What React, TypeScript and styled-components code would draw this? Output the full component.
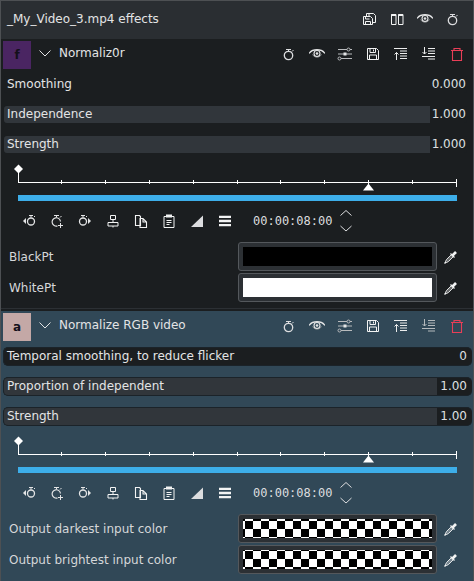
import React from 'react'
import styled, { createGlobalStyle } from 'styled-components'

const GlobalStyle = createGlobalStyle`
	html, body {
		margin: 0;
		padding: 0;
		width: 474px;
		height: 581px;
		overflow: hidden;
		background: #1b1e20;
	}
	* {
		box-sizing: border-box;
	}
`

const Stack = styled.div`
	width: 474px;
	height: 581px;
	display: flex;
	flex-direction: column;
	border: 1px solid #4d5053;
	border-bottom: none;
	font-family: 'DejaVu Sans', sans-serif;
	font-size: 12px;
	color: #e3e4e5;
	overflow: hidden;
`

const StackHeader = styled.div`
	height: 38px;
	flex: none;
	display: flex;
	align-items: center;
	justify-content: space-between;
	padding: 0 12px 2px 6px;
	background: #2a2e32;
	font-size: 12px;
`

const IconRow = styled.div<{ $gap: number }>`
	display: flex;
	align-items: center;
	gap: ${(p) => p.$gap}px;
`

const Effect = styled.section<{ $active?: boolean }>`
	height: ${(p) => (p.$active ? 270 : 272)}px;
	flex: none;
	display: flex;
	flex-direction: column;
	background: ${(p) => (p.$active ? '#314857' : '#1b1e20')};
	${(p) => !p.$active && 'box-shadow: inset 0 -2px 0 #1b1e20, inset 0 -3px 0 #2c3034;'}
`

const EffectHeader = styled.div`
	height: 30px;
	flex: none;
	display: flex;
	align-items: flex-start;
	padding: 2px 8px 0 2px;
`

const Swatch = styled.div<{ $color: string }>`
	width: 28px;
	height: 28px;
	flex: none;
	display: flex;
	align-items: center;
	justify-content: center;
	background: ${(p) => p.$color};
	color: #14101a;
	font-weight: 700;
	font-size: 12px;
	font-family: 'DejaVu Sans', sans-serif;
`

const Chevron = styled.svg`
	width: 12px;
	height: 7px;
	margin: 9px 8px 0 8px;
	flex: none;
`

const EffectTitle = styled.div`
	flex: 1;
	line-height: 24px;
`

const HeaderIcons = styled(IconRow)`
	height: 25px;
`

const ParamRow = styled.div<{ $active?: boolean }>`
	height: 30px;
	flex: none;
	display: flex;
	align-items: center;
	padding: 0 ${(p) => (p.$active ? 1 : 6)}px 0 ${(p) => (p.$active ? 2 : 3)}px;
`

const Track = styled.div<{ $active?: boolean }>`
	flex: 1;
	height: ${(p) => (p.$active ? 19 : 17)}px;
	display: flex;
	border-radius: ${(p) => (p.$active ? 5 : 3)}px;
	background: #1b1e20;
	overflow: hidden;
	${(p) => p.$active && 'border: 1px solid #1b2329; border-right: none;'}
`

const Fill = styled.div<{ $filled: boolean; $active?: boolean }>`
	flex: 1;
	display: flex;
	align-items: center;
	padding-left: 3px;
	background: ${(p) => (p.$filled ? '#31363b' : 'transparent')};
	white-space: nowrap;
`

const Value = styled.div<{ $active?: boolean }>`
	flex: none;
	width: ${(p) => (p.$active ? 35 : 37)}px;
	padding-right: ${(p) => (p.$active ? 5 : 1)}px;
	display: flex;
	align-items: center;
	justify-content: flex-end;
	color: #dfe0e1;
`

const Ruler = styled.svg`
	display: block;
	flex: none;
	width: 472px;
	height: 48px;
`

const Toolbar = styled.div`
	height: 28px;
	flex: none;
	display: flex;
	align-items: center;
	padding-left: 14px;
`

const ToolButton = styled.div`
	width: 28px;
	height: 28px;
	flex: none;
	display: flex;
	align-items: center;
	justify-content: center;
`

const Timecode = styled.div`
	margin-left: 14px;
	width: 87px;
	flex: none;
	font-family: 'DejaVu Sans Mono', monospace;
	font-size: 12px;
	color: #dcdddf;
`

const ColorList = styled.div`
	display: flex;
	flex-direction: column;
	gap: 2px;
	padding: 7px 0 0 8px;
`

const ColorRow = styled.div`
	height: 29px;
	display: flex;
	align-items: center;
`

const ColorLabel = styled.div`
	width: 229px;
	flex: none;
	color: #d5d7d9;
`

const ColorButton = styled.div`
	width: 199px;
	height: 29px;
	flex: none;
	padding: 4px;
	border: 1px solid #54585c;
	border-radius: 3px;
	background: #2c3034;
`

const ColorFace = styled.div<{ $kind: 'black' | 'white' | 'check'; $phase: number }>`
	width: 100%;
	height: 100%;
	background-color: ${(p) => (p.$kind === 'black' ? '#000' : '#fff')};
	${(p) =>
		p.$kind === 'check' &&
		`background-image: conic-gradient(#000 25%, #fff 25% 50%, #000 50% 75%, #fff 75%);
		background-size: 16px 16px;
		background-position: -6px ${p.$phase}px;`}
`

const PickerButton = styled.div`
	width: 28px;
	display: flex;
	justify-content: center;
`

type IconProps = { color?: string; size?: number; children: React.ReactNode }

const Icon = ({ color = '#e4e5e6', size = 16, children }: IconProps) => (
	<svg width={size} height={size} viewBox='0 0 16 16' fill='none' stroke={color} strokeWidth={1}>
		{children}
	</svg>
)

const WatchIcon = ({ color = '#dcdddf' }: { color?: string }) => (
	<Icon color={color}>
		<circle cx='7.5' cy='9.5' r='4.2' strokeWidth={1.3} />
		<path d='M5 3.5h5M7.5 3.500v2M11 5.500l1.500-1.500' />
	</Icon>
)

const EyeIcon = () => (
	<Icon>
		<path d='M0 7.500C3.500 2.500 12.500 2.500 16 7.500' strokeWidth={1.3} />
		<path d='M3.500 8.500c2 3.500 7 3.500 9 0' stroke='#8d9092' />
		<circle cx='8' cy='7.500' r='3' strokeWidth={1.1} />
		<circle cx='8' cy='7.500' r='1.300' fill='#e4e5e6' stroke='none' />
	</Icon>
)

const SlidersIcon = () => (
	<Icon color='#b9bbbd'>
		<path d='M1 3.500h9M13 3.500h2M1 8h6M9 8h6M4 12.500h11' />
		<circle cx='11.500' cy='3.500' r='1.500' />
		<rect x='6.500' y='6.500' width='3' height='3' fill='#e4e5e6' stroke='none' />
		<circle cx='2.500' cy='12.500' r='1.500' />
	</Icon>
)

const SaveIcon = () => (
	<Icon color='#f2f3f3'>
		<path d='M2.500 2.500h9l2 2v9h-11zM5 2.500v4h5.500v-4M8.500 3.500v2M4.500 13.500v-4.500h7v4.500' />
	</Icon>
)

const SaveAllIcon = () => (
	<Icon color='#f2f3f3'>
		<path d='M2.500 5.500h7l2 2v6h-9zM5.500 5.500V2.500h7l2 2v7h-3M4.500 5.500v2.500h4M4.500 13.500v-3h5v3M8 3v2.500' />
	</Icon>
)

const CompareIcon = () => (
	<Icon color='#f2f3f3'>
		<path d='M2.500 3.500h4.500v10H2.500zM9.500 3.500H14v10H9.500z' />
		<path d='M2.500 4h4.500M9.500 4H14' strokeWidth={2} />
	</Icon>
)

const MoveUpIcon = () => (
	<Icon color='#eceded'>
		<path d='M1 2.500h13M7 5h7M7 7.500h7M7 10h7M7 12.500h7M3.500 14V6.500M1.500 8.500l2-2 2 2' />
	</Icon>
)

const MoveDownIcon = ({ color = '#eceded' }: { color?: string }) => (
	<Icon color={color}>
		<path d='M7 2.500h7M7 5h7M7 7.500h7M1 10.500h13M7 13h7M3.500 1v7M1.500 6l2 2 2-2' />
	</Icon>
)

const TrashIcon = () => (
	<Icon color='#e93e57'>
		<path d='M2 4.500h12M5 4.500v-2h6v2M3.500 4.500v10h9v-10' strokeWidth={1.1} />
	</Icon>
)

const PrevKeyIcon = () => (
	<Icon>
		<path d='M5 5v6L2 8z' fill='#e4e5e6' stroke='none' />
		<circle cx='10' cy='8.500' r='3.500' strokeWidth={1.3} />
		<path d='M8 2.500h4M10 2.500v2M13 4l1-1' />
	</Icon>
)

const AddKeyIcon = () => (
	<Icon>
		<path d='M8.500 13a4.200 4.200 0 1 1 3-4.500' strokeWidth={1.2} />
		<path d='M5 2.500h5M7.500 2.500v2M11 4.500l1.500-1.500M11.500 10v5M9 12.500h5' />
	</Icon>
)

const NextKeyIcon = () => (
	<Icon>
		<path d='M11 5v6l3-3z' fill='#e4e5e6' stroke='none' />
		<circle cx='6' cy='8.500' r='3.500' strokeWidth={1.3} />
		<path d='M4 2.500h4M6 2.500v2M9 4l1-1' />
	</Icon>
)

const AlignIcon = () => (
	<Icon color='#f2f3f3'>
		<path d='M5.500 2.500h5v4h-5zM3 9.500h10v3.500H3zM8 6.500v3M8 13v1.500' />
	</Icon>
)

const CopyIcon = () => (
	<Icon color='#f2f3f3'>
		<path d='M2.500 2.500h4l1 1v9h-5zM7 5.500h3l3.500 3.500v5.500H7zM10 5.500V9h3.500' strokeWidth={1.1} />
	</Icon>
)

const PasteIcon = () => (
	<Icon color='#f2f3f3'>
		<path d='M3 3.500h10v11H3zM5.500 7.500h5M5.500 9.500h5M5.500 11.500h3' />
		<rect x='5' y='1.500' width='6' height='3' fill='#f2f3f3' stroke='none' />
	</Icon>
)

const RampIcon = () => (
	<Icon>
		<path d='M14 2.500v11.500H2z' fill='#dcdddf' stroke='none' />
	</Icon>
)

const MenuIcon = () => (
	<Icon color='#f2f3f3'>
		<path d='M2 3.800h12M2 8h12M2 12.200h12' strokeWidth={2.300} />
	</Icon>
)

const PickerIcon = () => (
	<Icon color='#f2f3f3'>
		<path d='M8.500 5.500l2 2-5 5-2 1-1-1 1-2z' strokeWidth={0.900} fill='rgba(255,255,255,0.35)' />
		<path d='M9 7l4-4' strokeWidth={2.600} stroke='#f2f3f3' />
		<path d='M7.500 4.500l4 4' strokeWidth={1.200} />
		<path d='M1.500 14.500l1.500-1.500' strokeWidth={1.400} />
	</Icon>
)

const SpinIcon = () => (
	<svg width='12' height='24' viewBox='0 0 12 24' fill='none' stroke='#dcdddf' strokeWidth={1}>
		<path d='M0.500 6.500l5.500-5 5.500 5M0.500 17l5.500 5 5.500-5' />
	</svg>
)

// pixel columns of the ruler ticks, relative to the frame's inner edge
const ticks = [60, 104, 148, 192, 236, 279, 323, 367, 411]

const TimelineRuler = () => (
	<Ruler viewBox='0 0 472 48' shapeRendering='crispEdges'>
		<path d='M17.500 5.500l4.500 4.500-4.500 4.500-4.500-4.500z' fill='#fff' shapeRendering='auto' />
		<rect x='17' y='12' width='1' height='12' fill='#fff' />
		<rect x='17' y='23' width='438' height='1' fill='#fff' />
		{ticks.map((t) => (
			<rect key={t} x={t} y='21' width='1' height='4' fill='#fff' />
		))}
		<rect x='455' y='20' width='1' height='8' fill='#fff' />
		<path d='M362 31.500l5.500-7 5.500 7z' fill='#fff' shapeRendering='auto' />
		<rect x='17' y='36' width='439' height='6' rx='1' fill='#3daee9' />
	</Ruler>
)

type Param = { label: string; value: string; filled: boolean }

type EffectProps = {
	active?: boolean
	letter: string
	swatch: string
	title: string
	params: Param[]
	colors: { label: string; kind: 'black' | 'white' | 'check'; phase: number }[]
}

const EffectPanel = ({ active, letter, swatch, title, params, colors }: EffectProps) => (
	<Effect $active={active}>
		<EffectHeader>
			<Swatch $color={swatch}>{letter}</Swatch>
			<Chevron viewBox='0 0 12 7' fill='none' stroke='#e3e4e5'>
				<path d='M0.500 0.500L6 6l5.500-5.500' />
			</Chevron>
			<EffectTitle>{title}</EffectTitle>
			<HeaderIcons $gap={12}>
				<WatchIcon />
				<EyeIcon />
				<SlidersIcon />
				<SaveIcon />
				<MoveUpIcon />
				<MoveDownIcon color={active ? '#b4b9bc' : '#eceded'} />
				<TrashIcon />
			</HeaderIcons>
		</EffectHeader>
		{params.map((p) => (
			<ParamRow key={p.label} $active={active}>
				<Track $active={active}>
					<Fill $filled={p.filled} $active={active}>
						{p.label}
					</Fill>
					<Value $active={active}>{p.value}</Value>
				</Track>
			</ParamRow>
		))}
		<TimelineRuler />
		<Toolbar>
			<ToolButton><PrevKeyIcon /></ToolButton>
			<ToolButton><AddKeyIcon /></ToolButton>
			<ToolButton><NextKeyIcon /></ToolButton>
			<ToolButton><AlignIcon /></ToolButton>
			<ToolButton><CopyIcon /></ToolButton>
			<ToolButton><PasteIcon /></ToolButton>
			<ToolButton><RampIcon /></ToolButton>
			<ToolButton><MenuIcon /></ToolButton>
			<Timecode>00:00:08:00</Timecode>
			<SpinIcon />
		</Toolbar>
		<ColorList>
			{colors.map((c) => (
				<ColorRow key={c.label}>
					<ColorLabel>{c.label}</ColorLabel>
					<ColorButton>
						<ColorFace $kind={c.kind} $phase={c.phase} />
					</ColorButton>
					<PickerButton>
						<PickerIcon />
					</PickerButton>
				</ColorRow>
			))}
		</ColorList>
	</Effect>
)

const App = () => (
	<>
		<GlobalStyle />
		<Stack>
			<StackHeader>
				<span>_My_Video_3.mp4 effects</span>
				<IconRow $gap={12}>
					<SaveAllIcon />
					<CompareIcon />
					<EyeIcon />
					<WatchIcon />
				</IconRow>
			</StackHeader>
			<EffectPanel
				letter='f'
				swatch='#4a2562'
				title='Normaliz0r'
				params={[
					{ label: 'Smoothing', value: '0.000', filled: false },
					{ label: 'Independence', value: '1.000', filled: true },
					{ label: 'Strength', value: '1.000', filled: true },
				]}
				colors={[
					{ label: 'BlackPt', kind: 'black', phase: 0 },
					{ label: 'WhitePt', kind: 'white', phase: 0 },
				]}
			/>
			<EffectPanel
				active
				letter='a'
				swatch='#c4a8a6'
				title='Normalize RGB video'
				params={[
					{ label: 'Temporal smoothing, to reduce flicker', value: '0', filled: false },
					{ label: 'Proportion of independent', value: '1.00', filled: true },
					{ label: 'Strength', value: '1.00', filled: true },
				]}
				colors={[
					{ label: 'Output darkest input color', kind: 'check', phase: 2 },
					{ label: 'Output brightest input color', kind: 'check', phase: 1 },
				]}
			/>
		</Stack>
	</>
)

export default App
